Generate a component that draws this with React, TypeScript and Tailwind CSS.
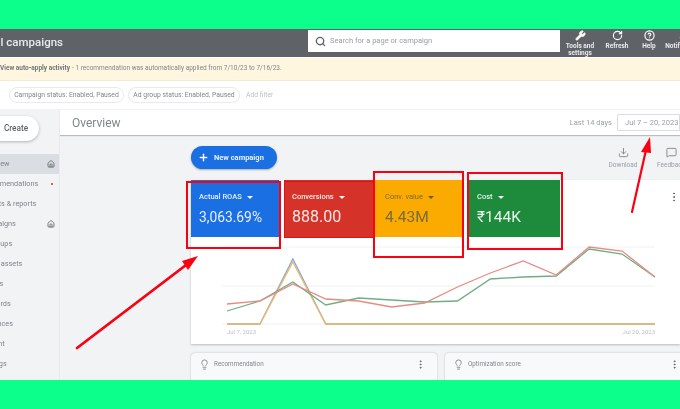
import { Bell, CircleHelp, Download, Home, Lightbulb, MessageSquare, MoreVertical, Plus, RotateCw, Search, Wrench } from "lucide-react"

const navItems = [
  { label: "Overview", active: true, icon: true, offset: "-ml-[20px]" },
  { label: "Recommendations", dot: true, offset: "-ml-[23px]" },
  { label: "Insights & reports", offset: "-ml-[21px]" },
  { label: "Campaigns", icon: true, offset: "-ml-[21px]" },
  { label: "Ad groups", offset: "-ml-[21px]" },
  { label: "Ads & assets", offset: "-ml-[20px]" },
  { label: "Videos", offset: "-ml-[19px]" },
  { label: "Keywords", offset: "-ml-[21px]" },
  { label: "Audiences", offset: "-ml-[21px]" },
  { label: "Content", offset: "-ml-[21px]" },
  { label: "Settings", offset: "-ml-[20px]" },
]

const xs = Array.from({ length: 14 }, (_, i) => 227 + i * 32.92)
const toPoints = (ys: number[]) => ys.map((y, i) => `${xs[i]},${y}`).join(" ")

const redLine = [305, 302, 285, 300, 302, 308, 304, 288, 274, 262, 276, 248, 252, 278]
const greenLine = [312, 302, 283, 306, 299, 301, 303, 302, 280, 278, 277, 250, 255, 278]
const blueLine = [325, 325, 260, 325, 325, 325, 325, 325, 325, 325, 325, 325, 325, 325]
const yellowLine = [325, 325, 263, 325, 325, 325, 325, 325, 325, 325, 325, 325, 325, 325]

function Caret({ className }: { className: string }) {
  return <span className={`ml-[5px] inline-block h-0 w-0 border-x-[3px] border-t-[3px] border-x-transparent ${className}`} />
}

function HeaderAction({ label, children, className = "" }: { label: string; children: React.ReactNode; className?: string }) {
  return (
    <div className={`flex w-[32px] shrink-0 flex-col items-center text-center text-[6.5px] leading-[7px] font-bold text-[#e8eaed] ${className}`}>
      {children}
      <span className="mt-[2px]">{label}</span>
    </div>
  )
}

function Tile({ title, value, className, caret, titleWeight, valueSize }: { title: string; value: string; className: string; caret: string; titleWeight: string; valueSize: string }) {
  return (
    <div className={`h-[57px] shrink-0 pt-[12px] ${className}`}>
      <div className={`flex h-[10px] items-center text-[7.5px] ${titleWeight}`}>
        {title}
        <Caret className={caret} />
      </div>
      <div className={`mt-[6px] leading-[18px] ${valueSize}`}>{value}</div>
    </div>
  )
}

function BottomCard({ title, className }: { title: string; className: string }) {
  return (
    <div className={`flex h-[40px] items-start rounded-t-[4px] bg-[#f8f9fa] pl-[8px] pt-[6px] shadow-[0_0_2px_rgba(60,64,67,0.3)] ${className}`}>
      <Lightbulb className="h-[11px] w-[11px] text-[#80868b]" />
      <span className="ml-[4px] text-[6.3px] leading-[11px] text-[#80868b]">{title}</span>
      <MoreVertical className="ml-auto mr-[11px] h-[11px] w-[11px] text-[#5f6368]" />
    </div>
  )
}

export default function App() {
  return (
    <div className="relative flex h-[409px] w-[680px] flex-col overflow-hidden bg-[#0bff8a] font-['Roboto',sans-serif]">
      <div className="h-[29px] shrink-0" />

      <div className="flex min-h-0 flex-1 flex-col overflow-hidden bg-white blur-[0.45px]">
        {/* Top bar */}
        <div className="flex h-[28px] shrink-0 items-start bg-[#5f6368]">
          <div className="-ml-[10px] w-[318px] shrink-0 pt-[5px] text-[11.5px] leading-[16px] font-medium text-[#e8eaed]">All campaigns</div>
          <div className="mt-[1px] flex h-[22px] w-[252px] shrink-0 items-center bg-white pl-[7px]">
            <Search className="h-[11px] w-[11px] text-[#5f6368]" strokeWidth={3} />
            <span className="ml-[4px] text-[7.5px] text-[#9aa0a6]">Search for a page or campaign</span>
          </div>
          <div className="ml-[4px] flex shrink-0 pt-[1px]">
            <HeaderAction label="Tools and settings">
              <Wrench className="h-[11px] w-[11px] fill-white text-white" />
            </HeaderAction>
            <HeaderAction label="Refresh" className="ml-[5px]">
              <RotateCw className="h-[11px] w-[11px] text-white" strokeWidth={2.5} />
            </HeaderAction>
            <HeaderAction label="Help">
              <CircleHelp className="h-[11px] w-[11px] text-white" strokeWidth={2.5} />
            </HeaderAction>
            <HeaderAction label="Notifications" className="ml-[3px]">
              <Bell className="h-[11px] w-[11px] fill-white text-white" />
            </HeaderAction>
          </div>
        </div>

        {/* Auto-apply banner */}
        <div className="mt-[1px] flex h-[23px] shrink-0 items-center whitespace-nowrap border-b border-[#f1ead6] bg-[#fef6df] text-[6.5px] text-[#80868b]">
          <span className="font-bold text-[#70757a]">View auto-apply activity</span>
          <span className="ml-[2px]">- 1 recommendation was automatically applied from 7/10/23 to 7/16/23.</span>
        </div>

        {/* Filters */}
        <div className="flex h-[29px] shrink-0 items-center whitespace-nowrap border-b border-[#f1f3f4] pl-[9px] text-[6.8px] text-[#80868b]">
          <span className="flex h-[16px] w-[115px] items-center justify-center rounded-full border border-[#e8eaed]">Campaign status: Enabled, Paused</span>
          <span className="ml-[4px] flex h-[16px] w-[112px] items-center justify-center rounded-full border border-[#e8eaed]">Ad group status: Enabled, Paused</span>
          <span className="ml-[6px] text-[#bdc1c6]">Add filter</span>
        </div>

        <div className="flex min-h-0 flex-1">
          {/* Side nav */}
          <div className="flex w-[60px] shrink-0 flex-col overflow-hidden border-r border-[#e8eaed] bg-[#f1f3f5]">
            <div className="flex h-[44px] shrink-0 items-start">
              <div className="-ml-[12px] mt-[6px] flex h-[25px] w-[51px] items-center justify-center rounded-full bg-white pl-[5px] text-[8.2px] font-medium text-[#5f6368] shadow-[0_1px_3px_rgba(60,64,67,0.35)]">
                Create
              </div>
            </div>
            {navItems.map((item) => (
              <div key={item.label} className={`relative flex h-[20px] shrink-0 items-center whitespace-nowrap text-[7.3px] text-[#80868b] ${item.active ? "bg-[#dadde1]" : ""}`}>
                <span className={`flex-1 ${item.offset}`}>{item.label}</span>
                {item.icon && <Home className="absolute right-[4px] h-[8px] w-[8px] text-[#5f6368]" strokeWidth={2.5} />}
                {item.dot && <span className="absolute right-[6px] h-[2px] w-[2px] rounded-full bg-[#d93025]" />}
              </div>
            ))}
          </div>

          <div className="flex min-w-0 flex-1 flex-col overflow-hidden bg-[#f1f3f5]">
            {/* Overview title row */}
            <div className="flex h-[25px] shrink-0 items-center bg-white pl-[12px] shadow-[0_1px_1px_rgba(60,64,67,0.3)]">
              <span className="text-[12px] text-[#80868b]">Overview</span>
              <span className="ml-auto text-[7.5px] text-[#9aa0a6]">Last 14 days</span>
              <span className="ml-[5px] flex h-[17px] w-[63px] shrink-0 items-center whitespace-nowrap rounded-l-[2px] border border-[#dadce0] pl-[7px] text-[7.5px] text-[#9aa0a6]">Jul 7 – 20, 2023</span>
            </div>

            <div className="pl-[131px]">
              {/* Action row */}
              <div className="flex h-[45px] items-start pt-[11px]">
                <div className="flex h-[23px] w-[86px] items-center rounded-full bg-[#1a6fe3] pl-[7px] text-[7.5px] font-bold text-[#e8f0fe] shadow-[0_1px_2px_rgba(60,64,67,0.4)]">
                  <Plus className="h-[11px] w-[11px] text-white" strokeWidth={3} />
                  <span className="ml-[5px]">New campaign</span>
                </div>
                <div className="ml-auto mt-[1px] flex w-[72px] shrink-0 text-[6.5px] text-[#9aa0a6]">
                  <div className="flex w-[30px] shrink-0 flex-col items-center">
                    <Download className="h-[11px] w-[11px] text-[#80868b]" />
                    <span className="mt-[3px]">Download</span>
                  </div>
                  <div className="ml-[19px] flex w-[28px] shrink-0 flex-col items-center">
                    <MessageSquare className="h-[11px] w-[11px] text-[#80868b]" />
                    <span className="mt-[3px]">Feedback</span>
                  </div>
                </div>
              </div>

              {/* Performance card */}
              <div className="h-[164px] bg-white shadow-[0_1px_2px_rgba(60,64,67,0.3)]">
                <div className="flex h-[57px]">
                  <Tile title="Actual ROAS" value="3,063.69%" className="mr-[5px] w-[88px] bg-[#1a6fe3] pl-[8px] text-[#e8f0fe]" caret="border-t-white" titleWeight="font-medium" valueSize="text-[13.8px]" />
                  <Tile title="Conversions" value="888.00" className="w-[91px] bg-[#d5322a] pl-[8px] text-[#fce8e6]" caret="border-t-white" titleWeight="font-medium" valueSize="text-[16px]" />
                  <Tile title="Conv. value" value="4.43M" className="mr-[7px] w-[87px] bg-[#fbab00] pl-[10px] text-[#7a6a3c]" caret="border-t-[#6d5a2c]" titleWeight="font-normal" valueSize="text-[15.5px]" />
                  <Tile title="Cost" value="₹144K" className="w-[91px] bg-[#1d8a3c] pl-[8px] text-[#e6f4ea]" caret="border-t-white" titleWeight="font-medium" valueSize="text-[15.5px]" />
                  <MoreVertical className="ml-[108px] mt-[11px] h-[12px] w-[12px] shrink-0 text-[#5f6368]" />
                </div>
                <svg viewBox="191 238 489 107" className="block h-[107px] w-[489px]">
                  {[248, 287, 325].map((y) => (
                    <line key={y} x1="222" x2="655" y1={y} y2={y} stroke="#eceef0" strokeWidth="0.8" />
                  ))}
                  <polyline points={toPoints(blueLine)} fill="none" stroke="#7ea8ee" strokeWidth="1.3" />
                  <polyline points={toPoints(yellowLine)} fill="none" stroke="#f0b860" strokeWidth="1.3" />
                  <polyline points={toPoints(greenLine)} fill="none" stroke="#6fae83" strokeWidth="1.3" />
                  <polyline points={toPoints(redLine)} fill="none" stroke="#e88a84" strokeWidth="1.3" />
                  <text x="227" y="335" fontSize="6" fill="#bdc1c6">Jul 7, 2023</text>
                  <text x="655" y="335" fontSize="6" fill="#bdc1c6" textAnchor="end">Jul 20, 2023</text>
                </svg>
              </div>

              {/* Bottom cards */}
              <div className="mt-[9px] flex w-[500px] gap-[8px]">
                <BottomCard title="Recommendation" className="w-[246px]" />
                <BottomCard title="Optimization score" className="w-[246px]" />
              </div>
            </div>
          </div>
        </div>
      </div>

      <div className="h-[29px] shrink-0" />

      {/* Red highlight boxes added on top of the screenshot */}
      <div className="absolute left-[186px] top-[181px] h-[68px] w-[95px] border-[2.5px] border-[#fa0010]" />
      <div className="absolute left-[284px] top-[181px] h-[57px] w-[91px] border border-[#e2100f]" />
      <div className="absolute left-[373px] top-[171px] h-[87px] w-[91px] border-[2.5px] border-[#fa0010]" />
      <div className="absolute left-[467px] top-[172px] h-[78px] w-[96px] border-[2.5px] border-[#fa0010]" />

      {/* Red arrows */}
      <svg viewBox="0 0 680 409" className="pointer-events-none absolute inset-0 h-[409px] w-[680px]">
        <line x1="77" y1="348" x2="190" y2="262" stroke="#fa0010" strokeWidth="2.8" strokeLinecap="round" />
        <polygon points="198,256 182,261 188,270" fill="#fa0010" />
        <line x1="632" y1="212" x2="646" y2="150" stroke="#fa0010" strokeWidth="2.2" strokeLinecap="round" />
        <polygon points="650,137 641,152 651,153" fill="#fa0010" />
      </svg>
    </div>
  )
}
